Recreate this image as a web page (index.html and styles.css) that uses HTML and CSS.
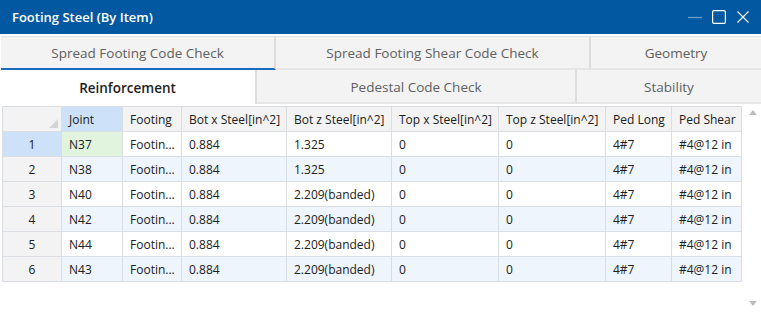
FILE: index.html
```html
<!DOCTYPE html>
<html>
<head>
	<title>Footing Steel (By Item)</title>
	<link rel="stylesheet" href="styles.css">
</head>
<body>
	<div class="window">
		<div class="title-bar">
			<span class="title-text">Footing Steel (By Item)</span>
			<div class="title-buttons">
				<svg width="14" height="14" viewBox="0 0 14 14"><line x1="0" y1="7.5" x2="14" y2="7.5" stroke="#6f9fcb" stroke-width="1.2"/></svg>
				<svg width="14" height="14" viewBox="0 0 14 14"><rect x="0.6" y="0.6" width="12.8" height="12.8" rx="1.5" fill="none" stroke="#fff" stroke-width="1.2"/></svg>
				<svg width="14" height="14" viewBox="0 0 14 14"><path d="M1.5 1.5 L12.5 12.5 M12.5 1.5 L1.5 12.5" stroke="#fff" stroke-width="1.1"/></svg>
			</div>
		</div>

		<div class="tabs">
			<div class="tab-row">
				<div class="tab w276 active-line">Spread Footing Code Check</div>
				<div class="tab w315">Spread Footing Shear Code Check</div>
				<div class="tab grow">Geometry</div>
			</div>
			<div class="tab-row">
				<div class="tab w257 selected">Reinforcement</div>
				<div class="tab w320">Pedestal Code Check</div>
				<div class="tab grow">Stability</div>
			</div>
		</div>

		<div class="grid-area">
			<table class="grid">
				<colgroup>
					<col style="width:59px"><col style="width:61px"><col style="width:59px">
					<col style="width:105px"><col style="width:105px"><col style="width:107px">
					<col style="width:107px"><col style="width:66px"><col style="width:70px">
				</colgroup>
				<thead>
					<tr>
						<th class="corner"><span class="corner-mark"></span></th>
						<th class="hl">Joint</th>
						<th>Footing</th>
						<th>Bot x Steel[in^2]</th>
						<th>Bot z Steel[in^2]</th>
						<th>Top x Steel[in^2]</th>
						<th>Top z Steel[in^2]</th>
						<th>Ped Long</th>
						<th>Ped Shear</th>
					</tr>
				</thead>
				<tbody>
					<tr>
						<td class="num hl">1</td><td class="current">N37</td><td>Footin...</td><td>0.884</td><td>1.325</td><td>0</td><td>0</td><td>4#7</td><td>#4@12 in</td>
					</tr>
					<tr class="alt">
						<td class="num">2</td><td>N38</td><td>Footin...</td><td>0.884</td><td>1.325</td><td>0</td><td>0</td><td>4#7</td><td>#4@12 in</td>
					</tr>
					<tr>
						<td class="num">3</td><td>N40</td><td>Footin...</td><td>0.884</td><td>2.209(banded)</td><td>0</td><td>0</td><td>4#7</td><td>#4@12 in</td>
					</tr>
					<tr class="alt">
						<td class="num">4</td><td>N42</td><td>Footin...</td><td>0.884</td><td>2.209(banded)</td><td>0</td><td>0</td><td>4#7</td><td>#4@12 in</td>
					</tr>
					<tr>
						<td class="num">5</td><td>N44</td><td>Footin...</td><td>0.884</td><td>2.209(banded)</td><td>0</td><td>0</td><td>4#7</td><td>#4@12 in</td>
					</tr>
					<tr class="alt">
						<td class="num">6</td><td>N43</td><td>Footin...</td><td>0.884</td><td>2.209(banded)</td><td>0</td><td>0</td><td>4#7</td><td>#4@12 in</td>
					</tr>
				</tbody>
			</table>
			<div class="scrollbar">
				<span class="arrow-up"></span>
				<span class="arrow-down"></span>
			</div>
		</div>
	</div>
</body>
</html>
```

FILE: styles.css
```css
html, body {
	margin: 0;
	padding: 0;
	background-color: #ffffff;
}

.window {
	width: 761px;
	height: 315px;
	font-family: "Open Sans", "Noto Sans", sans-serif;
	display: flex;
	flex-direction: column;
	overflow: hidden;
}

.title-bar {
	height: 34px;
	background-color: #0359a1;
	display: flex;
	align-items: center;
	justify-content: space-between;
	padding: 0 11px 0 12px;
	flex-shrink: 0;
}

.title-text {
	color: #ffffff;
	font-size: 13px;
	font-weight: 600;
}

.title-buttons {
	display: flex;
	gap: 10px;
}

.tabs {
	margin-top: 2px;
	flex-shrink: 0;
}

.tab-row {
	display: flex;
	height: 34px;
}

.tab {
	box-sizing: border-box;
	background-color: #f3f3f3;
	border-right: 2px solid #dedede;
	border-bottom: 2px solid #e6e6e6;
	color: #606060;
	font-size: 13.5px;
	display: flex;
	align-items: center;
	justify-content: center;
	padding-top: 1px;
}

.tab-row:first-child .tab {
	border-top: 1px solid #e2e2e2;
}

.tab.grow {
	flex: 1;
	border-right: none;
}

.w276 { width: 276px; }
.w315 { width: 315px; }
.w257 { width: 257px; }
.w320 { width: 320px; }

.tab.active-line {
	border-bottom: 2px solid #1a6ac0;
	margin-left: 1px;
	width: 275px;
}

.tab.selected {
	background-color: #ffffff;
	color: #1e1e1e;
	font-weight: 600;
	border-bottom: none;
}

.grid-area {
	display: flex;
	margin-top: 2px;
	padding-left: 2px;
	flex: 1;
}

.grid {
	border-collapse: collapse;
	table-layout: fixed;
	width: 739px;
	font-size: 12px;
	color: #202020;
	align-self: flex-start;
}

.grid th,
.grid td {
	border: 1px solid #dadde2;
	height: 24px;
	padding: 0 0 0 7px;
	text-align: left;
	white-space: nowrap;
	overflow: hidden;
}

.grid th {
	background-color: #f3f3f3;
	font-weight: normal;
}

.grid th.hl,
.grid td.hl {
	background-color: #cde2f8;
}

.grid th.corner {
	position: relative;
	padding: 0;
}

.corner-mark {
	position: absolute;
	right: 3px;
	bottom: 3px;
	width: 0;
	height: 0;
	border-left: 9px solid transparent;
	border-bottom: 9px solid #d4d4d4;
}

.grid td.num {
	background-color: #f3f3f3;
	text-align: center;
	padding: 0;
}

.grid td.num.hl {
	background-color: #cde2f8;
}

.grid tr.alt td {
	background-color: #eef5fd;
}

.grid tr.alt td.num {
	background-color: #f3f3f3;
}

.grid td.current {
	background-color: #e1f5de;
}

.scrollbar {
	width: 16px;
	margin-left: 4px;
	position: relative;
	background-color: #ffffff;
}

.arrow-up {
	position: absolute;
	left: 3px;
	top: 4px;
	width: 0;
	height: 0;
	border-left: 4px solid transparent;
	border-right: 4px solid transparent;
	border-bottom: 5px solid #bdbdbd;
}

.arrow-down {
	position: absolute;
	left: 3px;
	bottom: 9px;
	width: 0;
	height: 0;
	border-left: 4px solid transparent;
	border-right: 4px solid transparent;
	border-top: 5px solid #bdbdbd;
}
```
